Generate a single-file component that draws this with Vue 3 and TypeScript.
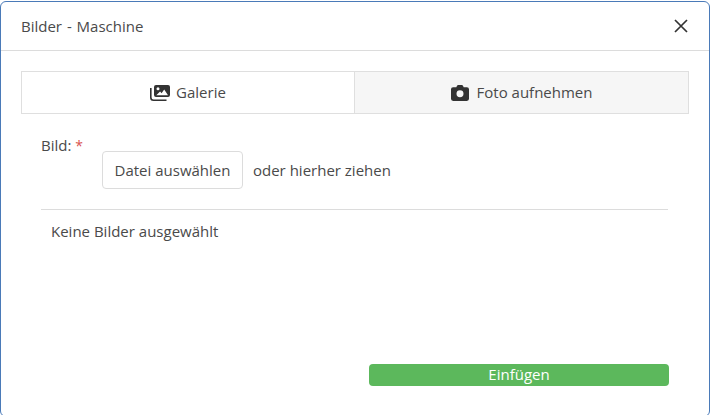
<script setup lang="ts">
const title: string = 'Bilder - Maschine'
</script>

<template>
  <div class="page">
    <div class="modal">
      <header class="head">
        <span class="title">{{ title }}</span>
        <button class="close" aria-label="Schließen">
          <svg width="14" height="14" viewBox="0 0 14 14"><path d="M1 1L13 13M13 1L1 13" stroke="#333" stroke-width="1.7" fill="none"/></svg>
        </button>
      </header>
      <div class="body">
        <div class="tabs">
          <div class="tab first">
            <svg class="ico" width="20" height="16" viewBox="0 0 20 16">
              <path fill="#333" fill-rule="evenodd" d="M6 0H18a2 2 0 0 1 2 2V10a2 2 0 0 1-2 2H6a2 2 0 0 1-2-2V2a2 2 0 0 1 2-2ZM6.300 10.200H18l-3.800-5.600-2.600 3.600-1.500-1.700ZM8 2.200a1.500 1.500 0 1 0 0 3 1.500 1.500 0 0 0 0-3Z"/>
              <path fill="none" stroke="#333" stroke-width="1.600" d="M.8 3V12.500A2.700 2.700 0 0 0 3.500 15.200H16.500"/>
            </svg>
            <span class="tab-text">Galerie</span>
          </div>
          <div class="tab alt">
            <svg class="ico" width="18" height="16" viewBox="0 0 17 15">
              <path fill="#333" fill-rule="evenodd" d="M5 2 5.700.7A1.200 1.200 0 0 1 6.800 0H10.200A1.200 1.200 0 0 1 11.300.7L12 2H15A2 2 0 0 1 17 4V13A2 2 0 0 1 15 15H2A2 2 0 0 1 0 13V4A2 2 0 0 1 2 2ZM8.500 5A3.300 3.300 0 1 0 8.500 11.600 3.300 3.300 0 0 0 8.500 5Z"/>
            </svg>
            <span class="tab-text">Foto aufnehmen</span>
          </div>
        </div>
        <div class="form">
          <div class="label">Bild: <span class="req">*</span></div>
          <div class="upload">
            <button class="pick">Datei auswählen</button>
            <span>oder hierher ziehen</span>
          </div>
          <hr class="rule" />
          <p class="empty">Keine Bilder ausgewählt</p>
          <div class="actions">
            <button class="submit">Einfügen</button>
          </div>
        </div>
      </div>
    </div>
  </div>
</template>

<style>
html, body { margin: 0; background: #fff; }
</style>

<style scoped>
.page {
  width: 710px;
  height: 415px;
  overflow: hidden;
  padding-top: 1px;
  box-sizing: border-box;
  font-family: "Open Sans", "Noto Sans", sans-serif;
  font-size: 15px;
  color: #4a4a4a;
}
.modal {
  width: 710px;
  height: 416px;
  box-sizing: border-box;
  border: 1px solid #4a7ab8;
  border-radius: 6px;
  background: #fff;
}
.head {
  height: 49px;
  box-sizing: border-box;
  border-bottom: 1px solid #dcdcdc;
  padding: 0 20px;
  display: flex;
  align-items: center;
  justify-content: space-between;
}
.title { word-spacing: 1px; }
.close {
  border: 0;
  background: none;
  padding: 0;
  display: flex;
  margin-right: 1px;
}
.body { padding: 20px 20px 0; }
.tabs {
  display: flex;
  height: 43px;
  box-sizing: border-box;
  border: 1px solid #dfdfdf;
  width: 668px;
}
.tab {
  display: flex;
  align-items: center;
  justify-content: center;
  gap: 6px;
}
.first { flex: 0 0 332px; }
.tab-text { padding-bottom: 2px; }
.alt {
  flex: 1;
  gap: 8px;
  background: #f6f6f6;
  border-left: 1px solid #dfdfdf;
}
.form {
  padding: 0 20px;
  width: 628px;
  box-sizing: content-box;
}
.label {
  height: 20px;
  box-sizing: content-box;
  padding-top: 21px;
  line-height: 20px;
}
.req { color: #d9534f; font-size: 14px; line-height: 1; }
.upload {
  display: flex;
  align-items: center;
  gap: 10px;
  margin-left: 61px;
  margin-top: -4px;
}
.pick {
  width: 141px;
  height: 38px;
  background: #fff;
  border: 1px solid #dcdcdc;
  border-radius: 4px;
  font: inherit;
  color: #4a4a4a;
  padding: 0;
}
.rule {
  border: 0;
  border-top: 1px solid #dcdcdc;
  margin: 20px 1px 0 0;
}
.empty {
  margin: 11px 0 0 10px;
  line-height: 20px;
}
.actions {
  display: flex;
  justify-content: flex-end;
  margin-top: 123px;
}
.submit {
  width: 300px;
  height: 22px;
  border: 0;
  border-radius: 4px;
  background: #5cb85c;
  color: #fff;
  font: inherit;
  line-height: 20px;
  padding: 0 0 2px;
}
</style>
